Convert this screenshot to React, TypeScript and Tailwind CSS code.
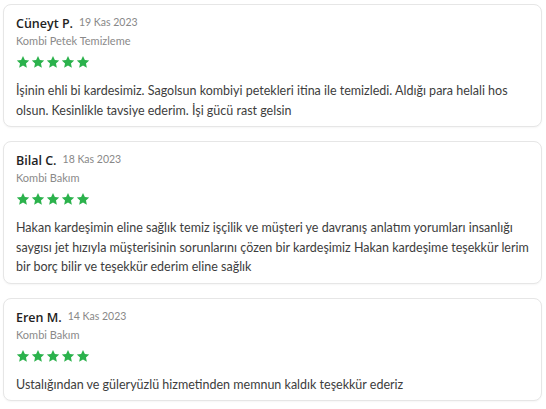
import React from 'react';

type Review = {
  name: string;
  date: string;
  service: string;
  text: string;
};

const reviews: Review[] = [
  {
    name: 'Cüneyt P.',
    date: '19 Kas 2023',
    service: 'Kombi Petek Temizleme',
    text: 'İşinin ehli bi kardesimiz. Sagolsun kombiyi petekleri itina ile temizledi. Aldığı para helali hos olsun. Kesinlikle tavsiye ederim. İşi gücü rast gelsin',
  },
  {
    name: 'Bilal C.',
    date: '18 Kas 2023',
    service: 'Kombi Bakım',
    text: 'Hakan kardeşimin eline sağlık temiz işçilik ve müşteri ye davranış anlatım yorumları insanlığı saygısı jet hızıyla müşterisinin sorunlarını çözen bir kardeşimiz Hakan kardeşime teşekkür lerim bir borç bilir ve teşekkür ederim eline sağlık',
  },
  {
    name: 'Eren M.',
    date: '14 Kas 2023',
    service: 'Kombi Bakım',
    text: 'Ustalığından ve güleryüzlü hizmetinden memnun kaldık teşekkür ederiz',
  },
];

function Star() {
  return (
    <svg viewBox="0 0 24 24" className="w-[14px] h-[14px]" fill="#2bb24c">
      <path d="M12 1.6l3.2 6.9 7.4.8-5.5 5.1 1.5 7.4L12 18l-6.6 3.8 1.5-7.4-5.5-5.1 7.4-.8z" />
    </svg>
  );
}

function ReviewCard({ review }: { review: Review }) {
  return (
    <div className="bg-white border border-[#e6e6e6] rounded-lg shadow-[0_1px_2px_rgba(0,0,0,0.04)] px-3 pt-[10px] pb-[6px]">
      <div className="flex items-baseline leading-[18px]">
        <span className="font-['Open_Sans',sans-serif] text-[12.5px] font-semibold text-[#222]">{review.name}</span>
        <span className="ml-[6px] text-[10.5px] text-[#888] relative -top-[2px]">{review.date}</span>
      </div>
      <div className="text-[11px] text-[#8a8a8a] leading-[16px]">{review.service}</div>
      <div className="flex gap-[1px] mt-[6px]">
        {[0, 1, 2, 3, 4].map((i) => (
          <Star key={i} />
        ))}
      </div>
      <p className="mt-[12px] text-[12.5px] leading-[19.5px] text-[#3d3d3d]">{review.text}</p>
    </div>
  );
}

export default function App() {
  return (
    <div className="w-[546px] h-[409px] overflow-hidden bg-white pt-1 pl-[3px] pr-1 font-['Lato','Liberation_Sans',sans-serif]">
      <div className="flex flex-col gap-[14px]">
        {reviews.map((r) => (
          <ReviewCard key={r.name} review={r} />
        ))}
      </div>
    </div>
  );
}
